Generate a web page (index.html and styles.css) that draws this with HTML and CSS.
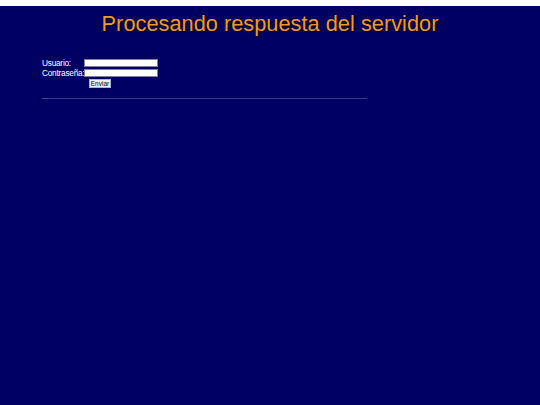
FILE: index.html
```html
<!DOCTYPE html>
<html>
<head>
<meta charset="utf-8">
<link rel="stylesheet" href="styles.css">
</head>
<body>
<div class="page">
  <h1 class="title">Procesando respuesta del servidor</h1>
  <div class="content">
    <form class="login">
      <div class="row"><label class="lbl">Usuario:</label><input class="field" type="text"></div>
      <div class="row"><label class="lbl">Contraseña:</label><input class="field" type="password"></div>
      <div class="row btnrow"><span class="lbl"></span><button class="btn" type="button">Enviar</button></div>
    </form>
    <hr class="rule">
  </div>
</div>
</body>
</html>
```
FILE: styles.css
```css
html, body { margin: 0; padding: 0; background: #ffffff; }
.page {
  margin-top: 6px;
  height: 399px;
  background: #000062;
  font-family: "Liberation Sans", Arial, sans-serif;
  overflow: hidden;
}
.title {
  margin: 0;
  padding-top: 5px;
  text-align: center;
  font-weight: normal;
  font-size: 21.8px;
  line-height: 26px;
  color: #f09a28;
  text-shadow: 1px 1px 1px #000000;
}
.content { padding: 22px 0 0 42px; }
.login { display: flex; flex-direction: column; gap: 2px; }
.row { display: flex; align-items: center; height: 8px; }
.lbl {
  flex: 0 0 42px;
  font-size: 8.3px;
  letter-spacing: -0.25px;
  color: #ffffff;
  line-height: 8px;
  white-space: nowrap;
}
.field {
  box-sizing: border-box;
  width: 74px; height: 8px;
  margin: 0; padding: 0;
  border: 1px solid #8080a0;
  background: #ffffff;
}
.btnrow { height: 9px; align-items: flex-start; }
.btn {
  margin: 0 0 0 5px;
  box-sizing: border-box;
  width: 22px;
  height: 9px;
  padding: 0;
  font-family: "Liberation Sans", Arial, sans-serif;
  font-size: 6.5px;
  line-height: 7px;
  border: 1px solid #b0b0c0;
  background: #efefef;
  color: #000;
}
.rule {
  margin: 10px 0 0 0;
  width: 325px;
  border: 0;
  border-top: 1px solid #3a3a8a;
  height: 0;
}
```
